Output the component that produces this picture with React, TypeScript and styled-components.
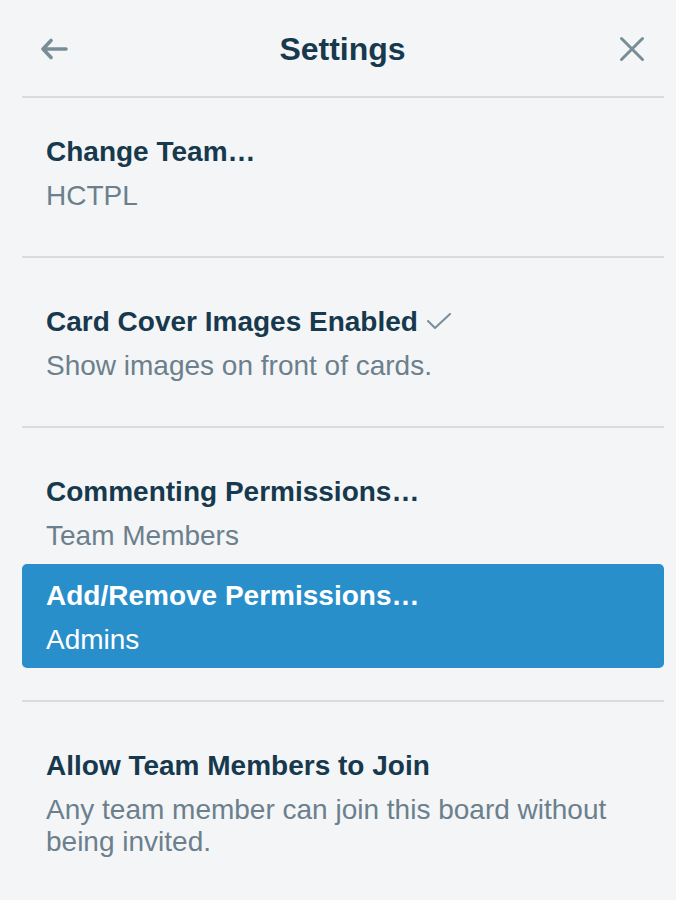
import React from "react";
import styled, { createGlobalStyle, css } from "styled-components";

const Global = createGlobalStyle`
  html, body {
    margin: 0;
    padding: 0;
    background: #f4f5f7;
  }
  body {
    font-family: "Liberation Sans", Arial, sans-serif;
    -webkit-font-smoothing: antialiased;
  }
`;

const Panel = styled.div`
  width: 676px;
  min-height: 900px;
  background: #f4f5f7;
  box-sizing: border-box;
  padding: 0 12px 0 22px;
`;

const Header = styled.header`
  height: 98px;
  box-sizing: border-box;
  border-bottom: 2px solid #d6dce0;
  display: grid;
  grid-template-columns: 1fr auto 1fr;
  align-items: center;
  padding: 1px 19px 0 18px;
`;

const Title = styled.h1`
  margin: 0;
  font-size: 32px;
  font-weight: 700;
  color: #17394d;
  line-height: 40px;
  text-align: center;
`;

const IconButton = styled.button<{ $align: "start" | "end" }>`
  justify-self: ${(p) => p.$align};
  background: none;
  border: 0;
  padding: 0;
  display: flex;
  align-items: center;
  justify-content: center;
  color: #798d99;
  cursor: pointer;
`;

const Section = styled.section<{ $first?: boolean; $last?: boolean }>`
  padding: ${(p) => (p.$first ? "22px" : "32px")} 0 32px;
  border-bottom: ${(p) => (p.$last ? "none" : "2px solid #d6dce0")};
`;

const Item = styled.div<{ $active?: boolean }>`
  padding: 16px 24px 12px;
  border-radius: 5px;
  cursor: pointer;
  ${(p) =>
    p.$active &&
    css`
      background: #298fca;
    `}
`;

const ItemTitle = styled.div<{ $active?: boolean }>`
  font-size: 28px;
  font-weight: 700;
  line-height: 32px;
  color: ${(p) => (p.$active ? "#ffffff" : "#17394d")};
  margin-bottom: 12px;
`;

const ItemSub = styled.div<{ $active?: boolean }>`
  font-size: 28px;
  font-weight: 400;
  line-height: 32px;
  color: ${(p) => (p.$active ? "#ffffff" : "#6b808c")};
`;

const Check = styled.svg`
  vertical-align: 2px;
  margin-left: 9px;
`;

const BackIcon = () => (
  <svg width="28" height="22" viewBox="0 0 28 22" fill="none">
    <path
      d="M3 11 H26 M11 2.5 L3 11 L11 19.5"
      stroke="currentColor"
      strokeWidth="3.6"
      strokeLinecap="round"
      strokeLinejoin="round"
    />
  </svg>
);

const CloseIcon = () => (
  <svg width="26" height="26" viewBox="0 0 26 26" fill="none">
    <path
      d="M2.5 2.5 L23.5 23.5 M23.5 2.5 L2.5 23.5"
      stroke="currentColor"
      strokeWidth="3"
      strokeLinecap="round"
    />
  </svg>
);

const CheckIcon = () => (
  <Check width="24" height="16" viewBox="0 0 24 16" fill="none">
    <path
      d="M1 8 L8 15 L23 1"
      stroke="#798d99"
      strokeWidth="2"
      strokeLinecap="round"
      strokeLinejoin="round"
    />
  </Check>
);

type Row = { title: string; sub: string; active?: boolean; checked?: boolean };

const sections: Row[][] = [
  [{ title: "Change Team…", sub: "HCTPL" }],
  [
    {
      title: "Card Cover Images Enabled",
      sub: "Show images on front of cards.",
      checked: true,
    },
  ],
  [
    { title: "Commenting Permissions…", sub: "Team Members" },
    { title: "Add/Remove Permissions…", sub: "Admins", active: true },
  ],
  [
    {
      title: "Allow Team Members to Join",
      sub: "Any team member can join this board without being invited.",
    },
  ],
];

export default function App() {
  return (
    <>
      <Global />
      <Panel>
        <Header>
          <IconButton $align="start" aria-label="Back">
            <BackIcon />
          </IconButton>
          <Title>Settings</Title>
          <IconButton $align="end" aria-label="Close">
            <CloseIcon />
          </IconButton>
        </Header>
        {sections.map((rows, i) => (
          <Section key={i} $first={i === 0} $last={i === sections.length - 1}>
            {rows.map((r) => (
              <Item key={r.title} $active={r.active}>
                <ItemTitle $active={r.active}>
                  {r.title}
                  {r.checked && <CheckIcon />}
                </ItemTitle>
                <ItemSub $active={r.active}>{r.sub}</ItemSub>
              </Item>
            ))}
          </Section>
        ))}
      </Panel>
    </>
  );
}
